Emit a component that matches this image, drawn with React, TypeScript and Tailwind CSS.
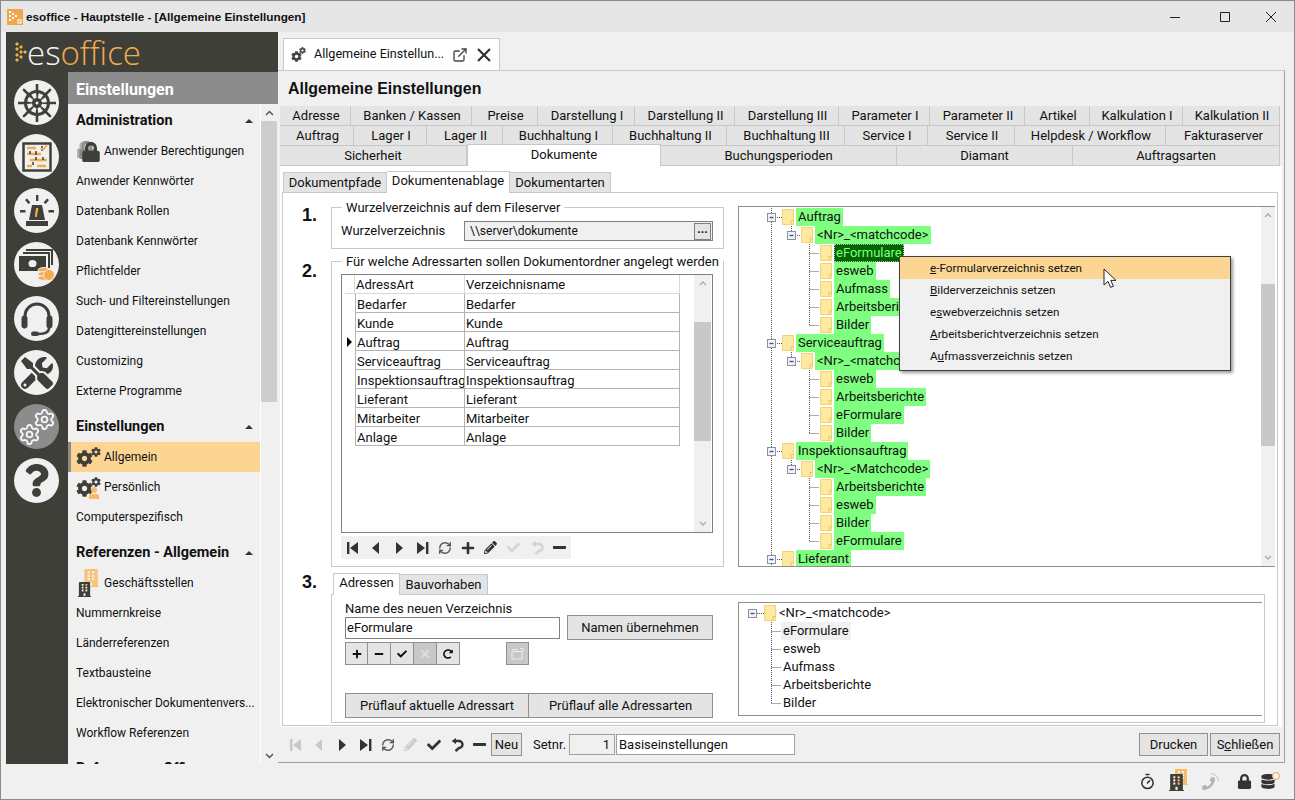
import type { ReactNode } from 'react';
import {
  FaBuilding,
  FaCheck,
  FaCog,
  FaDatabase,
  FaLock,
  FaMinus,
  FaPencilAlt,
  FaPhoneAlt,
  FaPlus,
  FaQuestion,
  FaRedoAlt,
  FaTimes,
  FaTools,
  FaUser,
} from 'react-icons/fa';
import { ExternalLink, RefreshCw, Settings, Timer } from 'lucide-react';

const dark = '#3f3f39';

/* ---------- small drawings ---------- */

function LogoDots() {
  const spots = [
    [2, 2],
    [2, 7],
    [2, 13],
    [2, 18],
    [6, 5],
    [6, 10],
    [6, 15],
    [10, 10],
  ];
  return (
    <svg width="12" height="20" viewBox="0 0 12 20" fill="#f2ab4f" className="shrink-0">
      {spots.map(([x, y]) => (
        <path key={`${x}-${y}`} d={`M${x} ${y - 2}l2 2-2 2-2-2z`} />
      ))}
    </svg>
  );
}

function AppIcon() {
  return (
    <div className="w-[16px] h-[16px] bg-[#f0a74b] flex items-center justify-center shrink-0">
      <svg width="14" height="14" viewBox="0 0 14 14" fill="#fff">
        <rect x="1" y="1" width="2" height="2" />
        <rect x="1" y="5" width="2" height="2" />
        <rect x="1" y="9" width="2" height="2" />
        <rect x="4" y="3" width="2" height="2" />
        <rect x="4" y="7" width="2" height="2" />
        <rect x="7" y="5" width="2" height="2" />
        <rect x="10" y="10" width="3" height="3" fill="none" stroke="#fff" strokeWidth="1" />
      </svg>
    </div>
  );
}

function HelmIcon() {
  const angles = [0, 45, 90, 135, 180, 225, 270, 315];
  return (
    <svg width="38" height="38" viewBox="-19 -19 38 38">
      {angles.map((a) => (
        <path key={a} d="M12 0h6.500" stroke={dark} strokeWidth="2.600" strokeLinecap="round" transform={`rotate(${a})`} />
      ))}
      <circle r="13" fill={dark} />
      <circle r="7.500" fill="none" stroke="#f0f0f0" strokeWidth="5" strokeDasharray="3.9 2" strokeDashoffset="-1" />
      <circle r="1.500" fill="#f0f0f0" />
    </svg>
  );
}

function BoardIcon() {
  return (
    <svg width="30" height="30" viewBox="0 0 30 30">
      <rect x="1.5" y="1.5" width="27" height="27" fill="none" stroke={dark} strokeWidth="2.5" />
      <path d="M5 6h9M5 12h14M5 24h5M15 24h9M8 18h17" stroke="#f2ab4f" strokeWidth="2.5" />
      <path d="M14 9v4M8 9v3M20 4v5M11 20v3M21 15v3M14 15v3" stroke={dark} strokeWidth="1.5" />
      <path d="M19 6l2 2 4-5" fill="none" stroke="#f2ab4f" strokeWidth="1.8" />
    </svg>
  );
}

function SirenIcon() {
  return (
    <svg width="34" height="32" viewBox="0 0 34 32" fill={dark}>
      <path d="M12 10h10l3 15H9z" />
      <rect x="6" y="26" width="22" height="5" />
      <path d="M16 13h2.4l-1.6 9h-2z" fill="#f2ab4f" />
      <path d="M16 0h2.4v6H16zM5 5l2-1.6 3.4 4-2 1.6zM29 5l-2-1.6-3.4 4 2 1.6zM0 15h5.5v2.4H0zM28.5 15H34v2.4h-5.5z" />
    </svg>
  );
}

function MoneyIcon() {
  return (
    <svg width="36" height="34" viewBox="0 0 36 34">
      <path d="M7 1h27v16h-2V3H7zM4 4h27v16h-2V6H4z" fill={dark} />
      <rect x="0" y="8" width="27" height="15" fill={dark} />
      <ellipse cx="13.5" cy="15.5" rx="4" ry="3.6" fill="#f0f0f0" />
      <ellipse cx="25" cy="22" rx="6" ry="2.4" fill="#f2ab4f" stroke="#f0f0f0" />
      <ellipse cx="25" cy="26" rx="6" ry="2.4" fill="#f2ab4f" stroke="#f0f0f0" />
      <ellipse cx="25" cy="30" rx="6" ry="2.4" fill="#f2ab4f" stroke="#f0f0f0" />
      <circle cx="30" cy="27" r="5.5" fill="#f2ab4f" stroke="#f0f0f0" />
    </svg>
  );
}

function HeadsetIcon() {
  return (
    <svg width="34" height="36" viewBox="0 0 34 36" fill="none" stroke={dark}>
      <path d="M5 19V15a12 12 0 0 1 24 0v4" strokeWidth="3" />
      <rect x="2" y="15" width="5" height="12" rx="2" fill={dark} strokeWidth="1" />
      <rect x="27" y="15" width="5" height="12" rx="2" fill={dark} strokeWidth="1" />
      <path d="M29 27c0 5-5 6-11 6" strokeWidth="2.4" />
      <rect x="11" y="30.5" width="8" height="4.5" rx="2.2" fill={dark} strokeWidth="0" />
    </svg>
  );
}

function Folder() {
  return (
    <svg width="12" height="16" viewBox="0 0 12 16" className="shrink-0">
      <path d="M.5.5h11v15H.5z" fill="#fde9a0" stroke="#f2d27a" />
      <path d="M9 15.5v-4h2.5" fill="none" stroke="#f0c552" />
    </svg>
  );
}

function Cursor() {
  return (
    <svg width="15" height="22" viewBox="0 0 15 22">
      <path d="M1 1v16l4-3.6 2.6 6 2.8-1.2-2.6-5.8H13z" fill="#fff" stroke="#222" strokeWidth="1" />
    </svg>
  );
}

function UndoHook({ size = 14, color = dark }: { size?: number; color?: string }) {
  return (
    <svg width={size} height={size} viewBox="0 0 14 14" fill="none" stroke={color} strokeWidth="2.4">
      <path d="M5 3h4a3.4 3.4 0 0 1 0 7L5.5 13" />
      <path d="M6 0L1.6 3 6 6" fill={color} stroke="none" />
    </svg>
  );
}

function NavIcon({ kind, color }: { kind: 'first' | 'prev' | 'next' | 'last'; color: string }) {
  const d = {
    first: 'M1 1h2.4v12H1zM12 1v12L4 7z',
    prev: 'M10 1v12L3 7z',
    next: 'M4 1v12l7-6z',
    last: 'M11 1h2.4v12H11zM2 1v12l8-6z',
  }[kind];
  return (
    <svg width="14" height="14" viewBox="0 0 14 14" fill={color}>
      <path d={d} />
    </svg>
  );
}

function GearPair({ color = dark }: { color?: string }) {
  return (
    <span className="relative block w-[24px] h-[24px] shrink-0">
      <FaCog size={17} color={color} className="absolute left-0 bottom-[2px]" />
      <FaCog size={10} color={color} className="absolute left-[15px] top-[2px]" />
    </span>
  );
}

function SmallGears() {
  return (
    <span className="relative block w-[15px] h-[15px] shrink-0">
      <FaCog size={11} color="#444" className="absolute left-0 bottom-0" />
      <FaCog size={7} color="#444" className="absolute right-0 top-0" />
    </span>
  );
}

function RailGears() {
  return (
    <span className="relative block w-[38px] h-[38px]">
      <Settings size={23} color="#f4f4f4" strokeWidth={2} className="absolute right-0 top-0" />
      <Settings size={23} color="#f4f4f4" strokeWidth={2} className="absolute left-0 bottom-0" />
    </span>
  );
}

/* ---------- left navigation ---------- */

const railIcons: { icon: ReactNode; active?: boolean }[] = [
  { icon: <HelmIcon /> },
  { icon: <BoardIcon /> },
  { icon: <SirenIcon /> },
  { icon: <MoneyIcon /> },
  { icon: <HeadsetIcon /> },
  { icon: <FaTools size={32} color={dark} /> },
  { icon: <RailGears />, active: true },
  { icon: <FaQuestion size={33} color={dark} /> },
];

function LockStack() {
  return (
    <span className="relative block w-[24px] h-[24px] shrink-0">
      <FaLock size={17} color="#b0b0b0" className="absolute left-0 top-[2px]" />
      <FaLock size={18} color="#8c8c8c" className="absolute left-[2px] top-[2px]" />
      <FaLock size={20} color={dark} className="absolute left-[5px] top-[3px]" />
    </span>
  );
}

function PersonGears() {
  return (
    <span className="relative block w-[24px] h-[24px] shrink-0">
      <GearPair />
      <FaUser size={12} color="#f8b968" className="absolute right-0 bottom-0" />
    </span>
  );
}

function OfficeIcon() {
  return (
    <span className="relative block w-[24px] h-[24px] shrink-0">
      <FaBuilding size={18} color="#f8c27a" className="absolute right-0 top-[-2px]" />
      <FaBuilding size={15} color={dark} className="absolute left-[1px] bottom-[-2px]" />
    </span>
  );
}

type NavEntry = { label: string; icon?: ReactNode; active?: boolean; header?: boolean };

const navEntries: NavEntry[] = [
  { label: 'Administration', header: true },
  { label: 'Anwender Berechtigungen', icon: <LockStack /> },
  { label: 'Anwender Kennwörter' },
  { label: 'Datenbank Rollen' },
  { label: 'Datenbank Kennwörter' },
  { label: 'Pflichtfelder' },
  { label: 'Such- und Filtereinstellungen' },
  { label: 'Datengittereinstellungen' },
  { label: 'Customizing' },
  { label: 'Externe Programme' },
  { label: 'Einstellungen', header: true },
  { label: 'Allgemein', icon: <GearPair />, active: true },
  { label: 'Persönlich', icon: <PersonGears /> },
  { label: 'Computerspezifisch' },
  { label: 'Referenzen - Allgemein', header: true },
  { label: 'Geschäftsstellen', icon: <OfficeIcon /> },
  { label: 'Nummernkreise' },
  { label: 'Länderreferenzen' },
  { label: 'Textbausteine' },
  { label: 'Elektronischer Dokumentenvers...' },
  { label: 'Workflow Referenzen' },
  { label: 'Referenzen - Office', header: true },
];

function NavHeader({ label, first }: { label: string; first: boolean }) {
  return (
    <div
      className={`flex items-center shrink-0 pl-[8px] pr-[6px] text-[14.5px] font-bold text-[#111] justify-between ${
        first ? 'h-[32px] pt-[2px]' : 'h-[36px] pt-[6px]'
      }`}
    >
      <span>{label}</span>
      <span className="w-0 h-0 border-x-[4px] border-x-transparent border-b-[4px] border-b-[#333] mr-[1px]" />
    </div>
  );
}

function NavItem({ entry }: { entry: NavEntry }) {
  return (
    <div
      className={`flex items-center shrink-0 h-[30px] text-[12px] text-[#111] ${
        entry.active ? 'bg-[#fdd593] border-l-[3px] border-[#8c8c8c] pl-[5px]' : 'pl-[8px]'
      }`}
    >
      {entry.icon && <span className="w-[28px] shrink-0">{entry.icon}</span>}
      <span className="truncate">{entry.label}</span>
    </div>
  );
}

function Sidebar() {
  return (
    <div className="w-[272px] ml-[5px] h-[732px] flex flex-col shrink-0 overflow-hidden">
      <div className="h-[40px] bg-[#3f3f39] flex items-center pl-[9px] shrink-0">
        <LogoDots />
        <span className="text-[33px] leading-[33px] font-light font-[family-name:'Open_Sans',sans-serif] text-[#f4f4f4]">
          es<span className="text-[#f2ab4f]">office</span>
        </span>
      </div>
      <div className="flex flex-1 min-h-0">
        <div className="w-[62px] bg-[#3f3f39] pt-[8px] flex flex-col items-center gap-[9px] shrink-0 pr-[1px]">
          {railIcons.map((r, i) => (
            <div
              key={i}
              className={`w-[45px] h-[45px] rounded-full flex items-center justify-center ${
                r.active ? 'bg-[#8c8c8c]' : 'bg-[#f0f0f0]'
              }`}
            >
              {r.icon}
            </div>
          ))}
        </div>
        <div className="flex-1 flex flex-col min-w-0">
          <div className="h-[32px] bg-[#8c8c8c] text-white font-bold text-[16px] pl-[8px] pt-[3px] flex items-center shrink-0">
            Einstellungen
          </div>
          <div className="flex flex-1 min-h-0">
            <div className="w-[193px] flex flex-col overflow-hidden border-r border-white">
              {navEntries.map((e, i) =>
                e.header ? <NavHeader key={e.label} label={e.label} first={i === 0} /> : <NavItem key={e.label} entry={e} />,
              )}
            </div>
            <div className="w-[17px] flex flex-col justify-between">
              <div>
                <div className="h-[17px] flex items-center justify-center">
                  <svg width="9" height="6" viewBox="0 0 9 6" fill="none" stroke="#555" strokeWidth="1.5"><path d="M1 5l3.500-3.500L8 5" /></svg>
                </div>
                <div className="h-[281px] bg-[#cdcdcd] mr-[1px]" />
              </div>
              <div className="h-[17px] flex items-center justify-center">
                <svg width="9" height="6" viewBox="0 0 9 6" fill="none" stroke="#555" strokeWidth="1.5"><path d="M1 1l3.500 3.500L8 1" /></svg>
              </div>
            </div>
          </div>
        </div>
      </div>
    </div>
  );
}

/* ---------- big tab rows ---------- */

const tabRows: { label: string; w: string; active?: boolean }[][] = [
  [
    { label: 'Adresse', w: 'w-[71px]' },
    { label: 'Banken / Kassen', w: 'w-[121px]' },
    { label: 'Preise', w: 'w-[66px]' },
    { label: 'Darstellung I', w: 'w-[97px]' },
    { label: 'Darstellung II', w: 'w-[100px]' },
    { label: 'Darstellung III', w: 'w-[104px]' },
    { label: 'Parameter I', w: 'w-[91px]' },
    { label: 'Parameter II', w: 'w-[95px]' },
    { label: 'Artikel', w: 'w-[65px]' },
    { label: 'Kalkulation I', w: 'w-[93px]' },
    { label: 'Kalkulation II', w: 'w-[97px]' },
  ],
  [
    { label: 'Auftrag', w: 'w-[74px]' },
    { label: 'Lager I', w: 'w-[73px]' },
    { label: 'Lager II', w: 'w-[76px]' },
    { label: 'Buchhaltung I', w: 'w-[110px]' },
    { label: 'Buchhaltung II', w: 'w-[114px]' },
    { label: 'Buchhaltung III', w: 'w-[118px]' },
    { label: 'Service I', w: 'w-[83px]' },
    { label: 'Service II', w: 'w-[87px]' },
    { label: 'Helpdesk / Workflow', w: 'w-[151px]' },
    { label: 'Fakturaserver', w: 'w-[114px]' },
  ],
  [
    { label: 'Sicherheit', w: 'w-[187px]' },
    { label: 'Dokumente', w: 'w-[194px]', active: true },
    { label: 'Buchungsperioden', w: 'w-[236px]' },
    { label: 'Diamant', w: 'w-[176px]' },
    { label: 'Auftragsarten', w: 'w-[207px]' },
  ],
];

function TabRows() {
  return (
    <div className="w-[1000px] flex flex-col">
      {tabRows.map((row, i) => (
        <div key={i} className="flex h-[20px]">
          {row.map((t) =>
            t.active ? (
              <div
                key={t.label}
                className={`${t.w} h-[22px] mt-[-2px] pb-[2px] relative z-10 bg-white border-x border-t border-[#c8c8c8] flex items-center justify-center text-[#111]`}
              >
                {t.label}
              </div>
            ) : (
              <div
                key={t.label}
                className={`${t.w} h-[20px] bg-[#e4e4e4] border-r border-b border-[#c8c8c8] flex items-center justify-center text-[#111] ${
                  i < 2 ? 'pl-[2px]' : ''
                }`}
              >
                {t.label}
              </div>
            ),
          )}
        </div>
      ))}
    </div>
  );
}

/* ---------- tree ---------- */

type TreeRowData = { label: string; level: 1 | 2 | 3; last?: boolean; selected?: boolean };

const treeRows: TreeRowData[] = [
  { label: 'Auftrag', level: 1 },
  { label: '<Nr>_<matchcode>', level: 2 },
  { label: 'eFormulare', level: 3, selected: true },
  { label: 'esweb', level: 3 },
  { label: 'Aufmass', level: 3 },
  { label: 'Arbeitsberichte', level: 3 },
  { label: 'Bilder', level: 3, last: true },
  { label: 'Serviceauftrag', level: 1 },
  { label: '<Nr>_<matchcode>', level: 2 },
  { label: 'esweb', level: 3 },
  { label: 'Arbeitsberichte', level: 3 },
  { label: 'eFormulare', level: 3 },
  { label: 'Bilder', level: 3, last: true },
  { label: 'Inspektionsauftrag', level: 1 },
  { label: '<Nr>_<Matchcode>', level: 2 },
  { label: 'Arbeitsberichte', level: 3 },
  { label: 'esweb', level: 3 },
  { label: 'Bilder', level: 3 },
  { label: 'eFormulare', level: 3, last: true },
  { label: 'Lieferant', level: 1 },
];

const dots = { stroke: '#555', strokeDasharray: '1 1', strokeWidth: 1 };

function ExpandBox({ cx }: { cx: number }) {
  return (
    <g>
      <rect x={cx - 4} y="5.500" width="8" height="8" fill="#f4f4f8" stroke="#8f8f99" />
      <path d={`M${cx - 2} 9.500h4`} stroke="#3a55a8" strokeWidth="1.4" />
    </g>
  );
}

function TreeGuides({ row }: { row: TreeRowData }) {
  const width = row.level === 1 ? 43 : row.level === 2 ? 62 : 81;
  return (
    <svg width={width} height="18" className="shrink-0">
      <path d="M32.500 0v18" {...dots} />
      {row.level === 1 && (
        <>
          <path d="M36 9.500h7" {...dots} />
          <ExpandBox cx={32.5} />
        </>
      )}
      {row.level === 2 && (
        <>
          <path d="M52.500 0v5" {...dots} />
          <path d="M56 9.500h6" {...dots} />
          <ExpandBox cx={52.5} />
        </>
      )}
      {row.level === 3 && (
        <>
          <path d={row.last ? 'M70.500 0v9.500' : 'M70.500 0v18'} {...dots} />
          <path d="M70.500 9.500h10" {...dots} />
        </>
      )}
    </svg>
  );
}

function TreeRow({ row }: { row: TreeRowData }) {
  return (
    <div className="flex items-center h-[18px] shrink-0">
      <TreeGuides row={row} />
      <Folder />
      <span
        className={`ml-[2px] h-[18px] px-[2px] flex items-center whitespace-nowrap ${
          row.selected
            ? 'bg-[#006400] text-[#7fff7f] outline-1 outline-dotted outline-[#bbb] -outline-offset-1'
            : 'bg-[#7fff7f] text-[#111]'
        }`}
      >
        {row.label}
      </span>
    </div>
  );
}

const menuItems: { before: string; key_: string; after: string; hot?: boolean }[] = [
  { before: '', key_: 'e', after: '-Formularverzeichnis setzen', hot: true },
  { before: '', key_: 'B', after: 'ilderverzeichnis setzen' },
  { before: 'e', key_: 's', after: 'webverzeichnis setzen' },
  { before: '', key_: 'A', after: 'rbeitsberichtverzeichnis setzen' },
  { before: 'A', key_: 'u', after: 'fmassverzeichnis setzen' },
];

function ContextMenu() {
  return (
    <div className="absolute left-[160px] top-[49px] z-20 w-[332px] h-[115px] bg-[#f0f0f0] border border-[#404040] shadow-[2px_2px_3px_rgba(0,0,0,0.4)] text-[11.7px]">
      {menuItems.map((m) => (
        <div
          key={m.after}
          className={`h-[22px] pl-[30px] pt-[2px] flex items-center text-[#111] ${m.hot ? 'bg-[#fdd593]' : ''}`}
        >
          <span className="whitespace-pre">
            {m.before}
            <span className="underline">{m.key_}</span>
            {m.after}
          </span>
        </div>
      ))}
      <div className="absolute left-[203px] top-[11px]">
        <Cursor />
      </div>
    </div>
  );
}

function ScrollRail({ thumbTop, thumbH, size }: { thumbTop: string; thumbH: string; size: string }) {
  return (
    <div className={`${size} bg-[#f0f0f0] flex flex-col justify-between relative shrink-0`}>
      <div className="h-[17px] flex items-center justify-center">
        <svg width="8" height="5" viewBox="0 0 8 5" fill="none" stroke="#aaa" strokeWidth="1.300"><path d="M1 4l3-3 3 3" /></svg>
      </div>
      <div className={`absolute left-0 right-0 top-0 bg-[#c8c8c8] ${thumbTop} ${thumbH}`} />
      <div className="h-[17px] flex items-center justify-center">
        <svg width="8" height="5" viewBox="0 0 8 5" fill="none" stroke="#aaa" strokeWidth="1.300"><path d="M1 1l3 3 3-3" /></svg>
      </div>
    </div>
  );
}

function UpperTree() {
  return (
    <div className="relative w-[537px] h-[361px] border-l border-y border-[#8f8f8f] flex">
      <div className="flex-1 h-[359px] pt-[1px] flex flex-col overflow-hidden">
        {treeRows.map((r, i) => (
          <TreeRow key={i} row={r} />
        ))}
      </div>
      <ScrollRail thumbTop="mt-[77px]" thumbH="h-[162px]" size="w-[14px] ml-[2px]" />
      <ContextMenu />
    </div>
  );
}

/* ---------- grid + fieldsets ---------- */

const gridRows = ['Bedarfer', 'Kunde', 'Auftrag', 'Serviceauftrag', 'Inspektionsauftrag', 'Lieferant', 'Mitarbeiter', 'Anlage'];

function AddressGrid() {
  return (
    <div className="w-[372px] h-[259px] border border-[#808080] flex justify-between">
      <div className="w-[338px] shrink-0">
        <div className="flex h-[19px] border-b border-[#d8d8d8] ml-[3px]">
          <div className="w-[10px] border-r border-[#d8d8d8]" />
          <div className="w-[110px] pl-[1px] pt-[2px] border-r border-[#d8d8d8] flex items-center">AdressArt</div>
          <div className="flex-1 pl-[1px] pt-[2px] border-r border-[#d8d8d8] flex items-center">Verzeichnisname</div>
        </div>
        {gridRows.map((r) => (
          <div key={r} className="flex h-[19px]">
            <div className="w-[13px] flex items-center justify-center pl-[1px]">
              {r === 'Auftrag' && (
                <span className="w-0 h-0 border-y-[5px] border-y-transparent border-l-[5px] border-l-black" />
              )}
            </div>
            <div className="w-[110px] pl-[1px] pt-[3px] border-r border-l border-b border-[#b4b4b4] flex items-center overflow-hidden whitespace-nowrap">
              {r}
            </div>
            <div className="flex-1 pl-[1px] pt-[3px] border-r border-b border-[#b4b4b4] flex items-center">{r}</div>
          </div>
        ))}
      </div>
      <ScrollRail thumbTop="mt-[47px]" thumbH="h-[119px]" size="w-[17px] mr-[1px]" />
    </div>
  );
}

function GridToolbar() {
  const on = '#333';
  const off = '#d4d4d4';
  const cells: ReactNode[] = [
    <NavIcon kind="first" color={on} />,
    <NavIcon kind="prev" color={on} />,
    <NavIcon kind="next" color={on} />,
    <NavIcon kind="last" color={on} />,
    <RefreshCw size={14} strokeWidth={2.4} color="#555" />,
    <FaPlus size={14} color={on} />,
    <FaPencilAlt size={13} color={on} />,
    <FaCheck size={13} color={off} />,
    <UndoHook color={off} />,
    <FaMinus size={15} color={on} />,
  ];
  return (
    <div className="flex w-[230px] h-[23px] bg-[#f0f0f0] mt-[3px]">
      {cells.map((c, i) => (
        <div key={i} className="w-[23px] flex items-center justify-center">
          {c}
        </div>
      ))}
    </div>
  );
}

function Group({ legend, className, children }: { legend: string; className: string; children: ReactNode }) {
  return (
    <div className={`relative w-[393px] border border-[#c8c8c8] ${className}`}>
      <span className="absolute left-[10px] top-[-8px] bg-white px-[4px] leading-[15px] whitespace-nowrap">
        {legend}
      </span>
      {children}
    </div>
  );
}

function StepNumber({ children }: { children: ReactNode }) {
  return (
    <div className="w-[48px] pl-[19px] shrink-0 font-[family-name:'Liberation_Sans',sans-serif] font-bold text-[18px] leading-[20px] text-[#111]">
      {children}
    </div>
  );
}

function LowerTree() {
  const kids = ['eFormulare', 'esweb', 'Aufmass', 'Arbeitsberichte', 'Bilder'];
  return (
    <div className="flex flex-col">
      <div className="flex items-center h-[18px]">
        <svg width="25" height="18" className="shrink-0">
          <path d="M14 9.500h11" {...dots} />
          <ExpandBox cx={13.5} />
        </svg>
        <Folder />
        <span className="ml-[3px]">{'<Nr>_<matchcode>'}</span>
      </div>
      {kids.map((k, i) => (
        <div key={k} className="flex items-center h-[18px]">
          <svg width="42" height="18" className="shrink-0">
            <path d={i === kids.length - 1 ? 'M32.500 0v9.500' : 'M32.500 0v18'} {...dots} />
            <path d="M32.500 9.500h9.500" {...dots} />
          </svg>
          <span className={`h-[18px] px-[2px] flex items-center ${i === 0 ? 'bg-[#f0f0f0]' : ''}`}>{k}</span>
        </div>
      ))}
    </div>
  );
}

function SectionThree() {
  const btn = 'bg-[#e4e4e4] border border-[#909090] flex items-center justify-center text-[#111]';
  return (
    <div className="flex mt-[5px]">
      <StepNumber>3.</StepNumber>
      <div className="w-[934px] flex flex-col">
        <div className="flex items-end h-[22px] pl-[2px]">
          <div className="w-[67px] h-[22px] bg-white border-x border-t border-[#c8c8c8] flex items-center justify-center relative z-10 mb-[-1px] pb-[4px]">
            Adressen
          </div>
          <div className="w-[88px] h-[20px] bg-[#e4e4e4] border-r border-t border-[#c8c8c8] flex items-center justify-center">
            Bauvorhaben
          </div>
        </div>
        <div className="h-[129px] border border-[#c8c8c8] flex pl-[13px]">
          <div className="w-[368px] shrink-0 flex flex-col pt-[7px]">
            <div className="h-[13px] leading-[14px]">Name des neuen Verzeichnis</div>
            <div className="flex items-center justify-between h-[25px]">
              <div className="w-[215px] h-[22px] bg-white border border-[#808080] pl-[1px] flex items-center">eFormulare</div>
              <div className={`w-[146px] h-[25px] ${btn}`}>Namen übernehmen</div>
            </div>
            <div className="flex mt-[2px] h-[23px]">
              <div className={`w-[23px] ${btn}`}><FaPlus size={10} color="#111" /></div>
              <div className={`w-[23px] ${btn} border-l-0`}><FaMinus size={10} color="#111" /></div>
              <div className={`w-[23px] ${btn} border-l-0`}><FaCheck size={10} color="#111" /></div>
              <div className="w-[23px] border border-l-0 border-[#909090] bg-[#c8c8c8] flex items-center justify-center"><FaTimes size={12} color="#dcdcdc" /></div>
              <div className={`w-[23px] ${btn} border-l-0`}><FaRedoAlt size={10} color="#111" /></div>
              <div className="w-[23px] ml-[46px] border border-[#909090] bg-[#c8c8c8] flex items-center justify-center">
                <svg width="14" height="13" viewBox="0 0 14 13" fill="none" stroke="#eee">
                  <path d="M1 4.500h10v7.500H1zM1 2.500h6M9 1.500h3v3" />
                </svg>
              </div>
            </div>
            <div className="flex mt-[28px] h-[25px]">
              <div className={`w-[184px] ${btn}`}>Prüflauf aktuelle Adressart</div>
              <div className={`w-[184px] ${btn} border-l-0`}>Prüflauf alle Adressarten</div>
            </div>
          </div>
          <div className="ml-[25px] mt-[7px] w-[524px] h-[114px] border-l border-y border-[#8f8f8f] pt-[1px]">
            <LowerTree />
          </div>
        </div>
      </div>
    </div>
  );
}

function DocumentsPanel() {
  return (
    <div className="w-[996px] h-[534px] border border-[#c8c8c8] pt-[13px]">
      <div className="flex">
        <div className="w-[441px] pt-[1px] shrink-0">
          <div className="flex">
            <div className="mt-[-2px]"><StepNumber>1.</StepNumber></div>
            <Group legend="Wurzelverzeichnis auf dem Fileserver" className="h-[42px] pt-[13px] pl-[9px]">
              <div className="flex items-center h-[20px]">
                <span className="w-[123px]">Wurzelverzeichnis</span>
                <div className="w-[249px] h-[20px] border border-[#808080] bg-[#f0f0f0] flex items-center justify-between pl-[5px] pr-[1px]">
                  <span className="text-[12px]">\\server\dokumente</span>
                  <span className="w-[17px] h-[17px] bg-[#e4e4e4] border border-[#808080] flex items-center justify-center text-[12px] font-bold leading-none pb-[4px]">
                    ...
                  </span>
                </div>
              </div>
            </Group>
          </div>
          <div className="flex mt-[12px]">
            <StepNumber>2.</StepNumber>
            <Group legend="Für welche Adressarten sollen Dokumentordner angelegt werden" className="h-[306px] pt-[12px] pl-[9px]">
              <AddressGrid />
              <GridToolbar />
            </Group>
          </div>
        </div>
        <div className="ml-[14px]">
          <UpperTree />
        </div>
      </div>
      <SectionThree />
    </div>
  );
}

/* ---------- main ---------- */

function BottomBar() {
  const on = '#333';
  const off = '#c8c8c8';
  const cells: ReactNode[] = [
    <NavIcon kind="first" color={off} />,
    <NavIcon kind="prev" color={off} />,
    <NavIcon kind="next" color={on} />,
    <NavIcon kind="last" color={on} />,
    <RefreshCw size={14} strokeWidth={2.4} color="#555" />,
    <FaPencilAlt size={13} color={off} />,
    <FaCheck size={14} color={on} />,
    <UndoHook color={on} />,
    <FaMinus size={15} color={on} />,
  ];
  return (
    <div className="flex h-[23px] mt-[6px] items-stretch">
      <div className="flex ml-[4px]">
        {cells.map((c, i) => (
          <div key={i} className="w-[23px] flex items-center justify-center">
            {c}
          </div>
        ))}
      </div>
      <div className="w-[31px] border border-[#909090] bg-[#e4e4e4] flex items-center justify-center">Neu</div>
      <span className="ml-[11px] w-[36px] flex items-center">Setnr.</span>
      <div className="w-[46px] border border-[#a0a0a0] my-[1px] flex items-center justify-end pr-[4px]">1</div>
      <div className="w-[179px] ml-[1px] border border-[#a0a0a0] bg-white my-[1px] flex items-center pl-[2px]">Basiseinstellungen</div>
      <div className="flex-1" />
      <div className="w-[69px] border border-[#909090] bg-[#e4e4e4] flex items-center justify-center">Drucken</div>
      <div className="w-[70px] ml-[2px] mr-[4px] border border-[#909090] bg-[#e4e4e4] flex items-center justify-center">
        <span>S<span className="underline">c</span>hließen</span>
      </div>
    </div>
  );
}

function PhoneIcon() {
  return (
    <span className="relative block w-[18px] h-[18px]">
      <FaPhoneAlt size={13} color="#b0b4b0" className="absolute left-0 bottom-0 -scale-x-100" />
      <svg width="18" height="18" viewBox="0 0 18 18" fill="none" stroke="#c4c8c4" className="absolute left-0 top-0">
        <path d="M9 5a5 5 0 0 1 4 4M9 1.500a9 9 0 0 1 7.500 7.500" />
      </svg>
    </span>
  );
}

function MainArea() {
  return (
    <div className="flex-1 min-w-0 flex flex-col">
      <div className="h-[38px] pl-[5px] pt-[6px] shrink-0">
        <div className="w-[217px] h-[32px] bg-white border-x border-t border-[#c8c8c8] flex items-center pl-[7px]">
          <SmallGears />
          <span className="ml-[8px] w-[131px] whitespace-nowrap text-[12.6px]">Allgemeine Einstellun...</span>
          <ExternalLink size={16} color="#444" className="ml-[7px] shrink-0" />
          <svg width="14" height="14" viewBox="0 0 14 14" stroke="#333" strokeWidth="2.200" className="ml-[9px] shrink-0">
            <path d="M1 1l12 12M13 1L1 13" />
          </svg>
        </div>
      </div>
      <div className="h-[693px] mr-[9px] shrink-0 border-t border-r border-b border-[#a0a0a0] border-t-[#c8c8c8] pl-[2px] flex flex-col">
        <div className="h-[35px] pl-[8px] flex items-center font-[family-name:'Liberation_Sans',sans-serif] font-bold text-[15.9px] text-[#111] shrink-0">
          Allgemeine Einstellungen
        </div>
        <TabRows />
        <div className="w-[1002px] h-[561px] bg-white px-[2px] pt-[4px] shrink-0 flex flex-col">
          <div className="flex items-end h-[22px] pl-[1px]">
            <div className="w-[104px] h-[20px] bg-[#e4e4e4] border-x border-t border-[#c8c8c8] flex items-center justify-center">Dokumentpfade</div>
            <div className="w-[123px] h-[22px] bg-white border-r border-t border-[#c8c8c8] flex items-center justify-center relative z-10 mb-[-1px] pb-[4px]">Dokumentenablage</div>
            <div className="w-[101px] h-[20px] bg-[#e4e4e4] border-r border-t border-[#c8c8c8] flex items-center justify-center">Dokumentarten</div>
          </div>
          <DocumentsPanel />
        </div>
        <BottomBar />
      </div>
      <div className="flex-1 flex items-center justify-end pr-[19px]">
        <span className="w-[32px] flex justify-center"><Timer size={17} color="#333" strokeWidth={2.2} /></span>
        <span className="w-[32px] flex justify-center relative">
          <FaBuilding size={16} color="#f8b968" className="absolute right-[6px] top-[-3px]" />
          <FaBuilding size={17} color="#3f3f39" className="relative mt-[2px] mr-[5px]" />
        </span>
        <span className="w-[32px] flex justify-center"><PhoneIcon /></span>
        <span className="w-[34px] flex justify-center"><FaLock size={15} color="#333" /></span>
        <span className="w-[14px] flex justify-center relative">
          <FaDatabase size={15} color="#333" />
          <span className="absolute right-[-5px] top-[-2px] w-[8px] h-[8px] rounded-full border-[1.5px] border-[#f2ab4f] bg-[#f0f0f0]" />
        </span>
      </div>
    </div>
  );
}

function TitleBar() {
  return (
    <div className="h-[31px] bg-[#e6e6e6] flex items-center pl-[6px] shrink-0">
      <AppIcon />
      <span className="ml-[3px] font-[family-name:'Liberation_Sans',sans-serif] font-bold text-[11.75px] text-[#111] whitespace-nowrap">
        esoffice - Hauptstelle - [Allgemeine Einstellungen]
      </span>
      <div className="flex-1" />
      <svg width="10" height="10" viewBox="0 0 10 10" stroke="#222" fill="none" className="mr-[40px]">
        <path d="M0 5.500h10" />
      </svg>
      <svg width="10" height="10" viewBox="0 0 10 10" stroke="#222" fill="none" className="mr-[36px]">
        <path d="M.5.5h9v9h-9z" />
      </svg>
      <svg width="10" height="10" viewBox="0 0 10 10" stroke="#222" fill="none" className="mr-[18px]">
        <path d="M0 0l10 10M10 0L0 10" />
      </svg>
    </div>
  );
}

export default function App() {
  return (
    <div className="w-[1295px] h-[800px] border border-[#8a8a8a] bg-[#f0f0f0] flex flex-col overflow-hidden font-[family-name:Roboto,sans-serif] text-[13px] text-[#111]">
      <TitleBar />
      <div className="flex flex-1 min-h-0">
        <Sidebar />
        <MainArea />
      </div>
    </div>
  );
}
